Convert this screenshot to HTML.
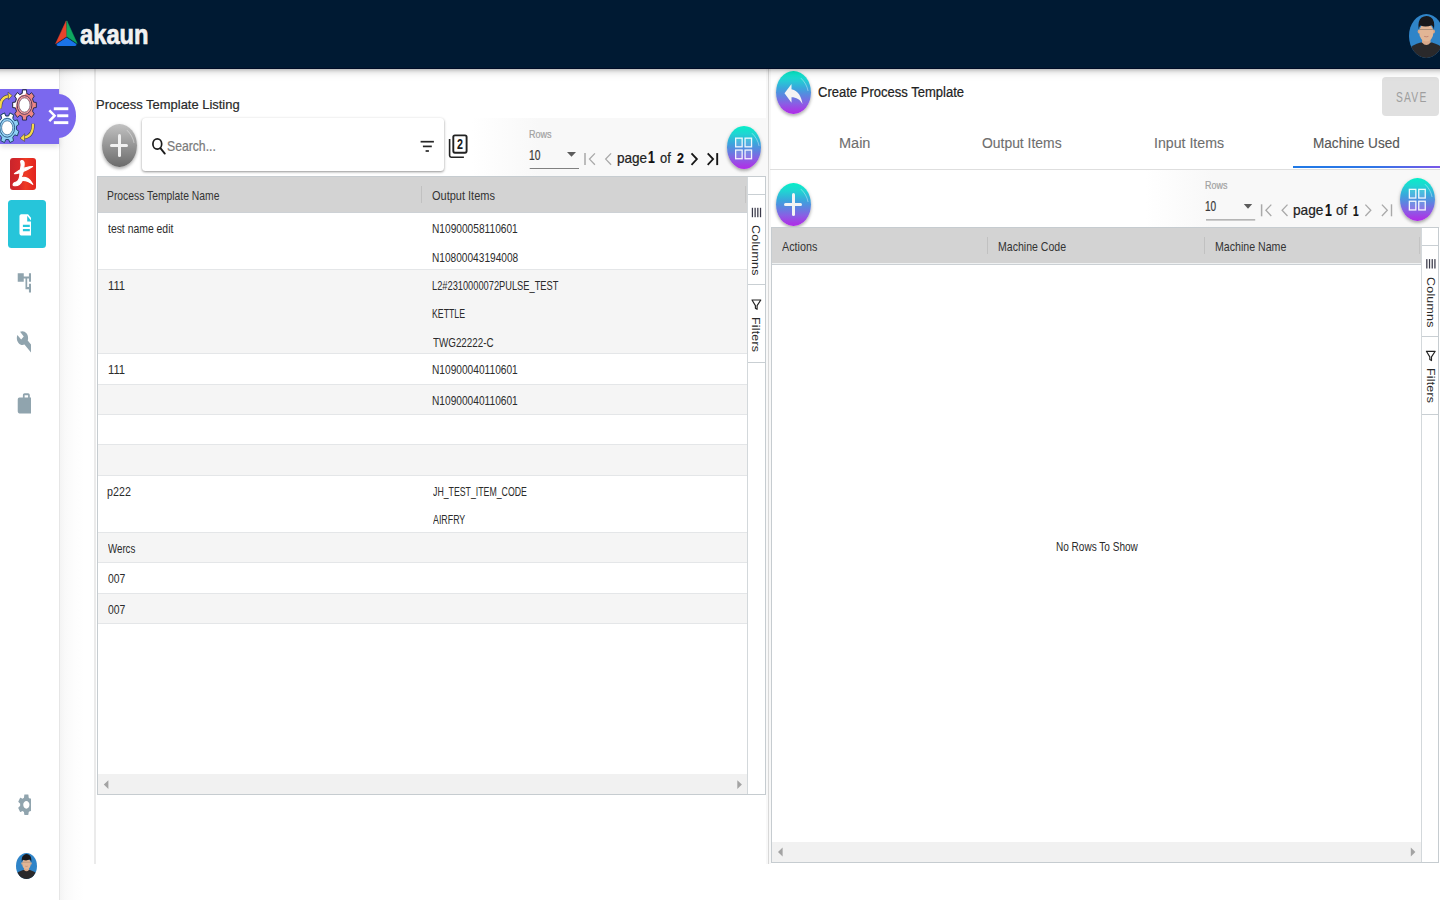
<!DOCTYPE html>
<html lang="en"><head><meta charset="utf-8"><title>akaun - Process Template</title>
<style>
*{box-sizing:border-box;margin:0;padding:0}
html,body{width:1440px;height:900px;overflow:hidden;background:#fff;font-family:"Liberation Sans",sans-serif}
.a{position:absolute}
.t{position:absolute;white-space:nowrap;line-height:1;transform-origin:0 0;display:block;z-index:7;-webkit-text-stroke:0.22px currentColor}
svg{position:absolute;overflow:visible}
#topbar{left:-20px;top:0;width:1480px;height:69px;background:#001a33;border-bottom:1px solid #000c26;box-shadow:0 1px 4px rgba(0,0,0,.26),0 3px 9px rgba(0,0,0,.13);z-index:5}
#side{left:0;top:69px;width:60px;height:831px;background:#fff;border-right:1px solid #e6e6e6;z-index:2}
#gap{left:60px;top:69px;width:35px;height:831px;background:linear-gradient(to right,#f4f4f4 0,#f9f9f9 5px,#fdfdfd 14px,#fff 24px)}
.fab{position:absolute;width:34.5px;height:43px;border-radius:50%;box-shadow:0 2px 3px rgba(0,0,0,.24),0 1px 4px rgba(0,0,0,.12)}
.grad{background:linear-gradient(to bottom,#06eec8 0%,#1fd6d2 18%,#3aa6dc 40%,#5f82e0 58%,#8a5ee4 76%,#a838e6 93%,#ae2ee8 100%)}
.grey{background:linear-gradient(to bottom,#c2c2c2 0%,#9a9a9a 45%,#6b6b6b 100%)}
.hdr{background:#d3d3d3}
.row{position:absolute;left:0;width:100%;border-bottom:1px solid #e4e6e8}
.odd{background:#f5f5f5}
.ln{position:absolute;background:#c9cfd3}
</style></head><body>
<!-- top bar -->
<div id="topbar" class="a"></div>
<svg style="left:55px;top:20px;z-index:6" width="23" height="27" viewBox="0 0 23 27">
  <path d="M11.2 0.9 L0.6 23.7 L11.5 16.6 Z" fill="#e8432a" stroke="#e8432a" stroke-width="0.5" stroke-linejoin="round"/>
  <path d="M11.9 0.9 L22.2 23.5 L11.8 16.6 Z" fill="#0fa860" stroke="#0fa860" stroke-width="0.5" stroke-linejoin="round"/>
  <path d="M11.6 17.5 L1.6 24 Q1.1 26 3.2 26 L19.8 26 Q21.9 26 21.4 24 Z" fill="#1a73e8"/>
</svg>
<!-- avatar top-right -->
<svg style="left:1408.7px;top:14px;z-index:6;overflow:hidden" width="34.6" height="44" viewBox="0 0 34.6 44" preserveAspectRatio="none"><defs><clipPath id="av1"><ellipse cx="17.3" cy="22" rx="17.3" ry="22"/></clipPath></defs><g clip-path="url(#av1)"><rect width="34.6" height="44" fill="#2f84c8"/><path d="M-1 36 Q2 31.6 11.6 28.6 L23 28.6 Q32.6 31.6 35.6 36 L35.6 46 L-1 46 Z" fill="#2a292b"/><path d="M13.2 22 L21.4 22 L21.6 28.4 Q17.3 33.6 13 28.4 Z" fill="#d9a98a"/><ellipse cx="9.9" cy="17.6" rx="1.2" ry="2" fill="#d8a585"/><ellipse cx="24.7" cy="17.6" rx="1.2" ry="2" fill="#d8a585"/><ellipse cx="17.3" cy="18.4" rx="7.1" ry="9.2" fill="#e2b595"/><path d="M9.6 15.4 Q8.6 6.5 12.6 3.6 Q17 0.4 21.8 3.2 Q26.2 6 25 15.4 Q24.4 12.4 22.8 11.2 Q17 13.6 11.4 11.6 Q10 13 9.6 15.4 Z" fill="#18181b"/><path d="M10.8 15.6 H23.8" stroke="#6b5a52" stroke-width="0.7" opacity=".7"/><path d="M15.2 22.4 Q17.3 23.2 19.4 22.4" stroke="#b97a6a" stroke-width="0.8" fill="none"/></g></svg>
<!-- sidebar -->
<div id="gap" class="a"></div>
<div id="side" class="a"></div>
<div class="a" style="left:0;top:88.7px;width:59px;height:55.3px;background:#7b68ee;z-index:3;box-shadow:0 3px 5px rgba(0,0,0,.12)"></div>
<div class="a" style="left:58px;top:94.4px;width:17.6px;height:43.6px;background:#7b68ee;border-radius:0 17px 17px 0/0 21.8px 21.8px 0;z-index:3"></div>
<svg style="left:0;top:0;z-index:4" width="80" height="150" viewBox="0 0 80 150">
<defs><clipPath id="cw"><path d="M0 88 L30 88 L12 112 L0 112 Z"/></clipPath><clipPath id="cw2"><path d="M-6 110 L20 110 L9 124 L-6 128 Z"/></clipPath></defs>
<path d="M33.58 102.12 L36.34 102.49 L36.34 107.51 L33.58 107.88 L32.52 111.16 L34.26 113.90 L31.48 117.45 L29.33 115.22 L26.76 116.58 L26.47 120.09 L22.53 120.09 L22.24 116.58 L19.67 115.22 L17.52 117.45 L14.74 113.90 L16.48 111.16 L15.42 107.88 L12.66 107.51 L12.66 102.49 L15.42 102.12 L16.48 98.84 L14.74 96.10 L17.52 92.55 L19.67 94.78 L22.24 93.42 L22.53 89.91 L26.47 89.91 L26.76 93.42 L29.33 94.78 L31.48 92.55 L34.26 96.10 L32.52 98.84 Z" fill="#ee8686" stroke="#2b2d55" stroke-width="1" stroke-linejoin="round"/>
<path d="M33.58 102.12 L36.34 102.49 L36.34 107.51 L33.58 107.88 L32.52 111.16 L34.26 113.90 L31.48 117.45 L29.33 115.22 L26.76 116.58 L26.47 120.09 L22.53 120.09 L22.24 116.58 L19.67 115.22 L17.52 117.45 L14.74 113.90 L16.48 111.16 L15.42 107.88 L12.66 107.51 L12.66 102.49 L15.42 102.12 L16.48 98.84 L14.74 96.10 L17.52 92.55 L19.67 94.78 L22.24 93.42 L22.53 89.91 L26.47 89.91 L26.76 93.42 L29.33 94.78 L31.48 92.55 L34.26 96.10 L32.52 98.84 Z" fill="#fff" clip-path="url(#cw)" stroke="#2b2d55" stroke-width="1" stroke-linejoin="round"/>
<ellipse cx="24.5" cy="105" rx="8.2" ry="10.3" fill="#ee8686"/>
<ellipse cx="24.5" cy="105" rx="7.4" ry="9.4" fill="#f3a3a3" stroke="#4a3050" stroke-width="0.9"/>
<ellipse cx="24.5" cy="105" rx="5.6" ry="7.2" fill="#fff" stroke="#5a3a55" stroke-width="0.7"/>
<path d="M16.46 129.56 L18.89 131.23 L17.38 135.84 L14.73 134.84 L12.76 137.34 L13.55 140.70 L9.91 142.61 L8.59 139.52 L5.81 139.52 L4.49 142.61 L0.85 140.70 L1.64 137.34 L-0.33 134.84 L-2.98 135.84 L-4.49 131.23 L-2.06 129.56 L-2.06 126.04 L-4.49 124.37 L-2.98 119.76 L-0.33 120.76 L1.64 118.26 L0.85 114.90 L4.49 112.99 L5.81 116.08 L8.59 116.08 L9.91 112.99 L13.55 114.90 L12.76 118.26 L14.73 120.76 L17.38 119.76 L18.89 124.37 L16.46 126.04 Z" fill="#8fd0f5" stroke="#23466e" stroke-width="1" stroke-linejoin="round"/>
<path d="M16.46 129.56 L18.89 131.23 L17.38 135.84 L14.73 134.84 L12.76 137.34 L13.55 140.70 L9.91 142.61 L8.59 139.52 L5.81 139.52 L4.49 142.61 L0.85 140.70 L1.64 137.34 L-0.33 134.84 L-2.98 135.84 L-4.49 131.23 L-2.06 129.56 L-2.06 126.04 L-4.49 124.37 L-2.98 119.76 L-0.33 120.76 L1.64 118.26 L0.85 114.90 L4.49 112.99 L5.81 116.08 L8.59 116.08 L9.91 112.99 L13.55 114.90 L12.76 118.26 L14.73 120.76 L17.38 119.76 L18.89 124.37 L16.46 126.04 Z" fill="#fff" clip-path="url(#cw2)" stroke="#23466e" stroke-width="1" stroke-linejoin="round"/>
<ellipse cx="7.2" cy="127.8" rx="8.2" ry="10.3" fill="#8fd0f5"/>
<ellipse cx="7.2" cy="127.8" rx="7.4" ry="9.4" fill="#9ad6f6" stroke="#23507e" stroke-width="0.9"/>
<ellipse cx="7.2" cy="127.8" rx="5.6" ry="7" fill="#fff" stroke="#2a5a8a" stroke-width="0.7"/>
<path d="M0.2 108.5 Q0.2 97 8.5 96.2" fill="none" stroke="#3a3a50" stroke-width="3.4"/>
<path d="M0.2 108.5 Q0.2 97 8.5 96.2" fill="none" stroke="#f6d84a" stroke-width="2.4"/>
<path d="M8 92.2 L12.2 95.6 L8.6 99.6 Z" fill="#f6d84a" stroke="#3a3a50" stroke-width="0.6" stroke-linejoin="round"/>
<path d="M33 123.8 Q33.4 136.5 24 137.6" fill="none" stroke="#3a3a50" stroke-width="3.2"/>
<path d="M33 123.8 Q33.4 136.5 24 137.6" fill="none" stroke="#f6d84a" stroke-width="2.2"/>
<path d="M24.6 133.8 L20 138.2 L24.6 141.4 Z" fill="#f6d84a" stroke="#3a3a50" stroke-width="0.6" stroke-linejoin="round"/>
<g fill="#fff"><rect x="53.8" y="107.3" width="14.5" height="2.9"/><rect x="57.2" y="114.3" width="11.1" height="2.9"/><rect x="53.8" y="121.2" width="14.5" height="2.9"/></g>
<path d="M49.3 110.4 L54.6 115.7 L49.3 121.2" fill="none" stroke="#fff" stroke-width="2.5"/>
</svg>
<div class="a" style="left:10px;top:158px;width:25.8px;height:31.7px;border-radius:3px;background:linear-gradient(to right,#c9252b 0%,#d8282a 35%,#ee3a24 60%,#e2231f 100%);z-index:3"></div>
<svg style="left:10px;top:158px;z-index:4" width="26" height="32" viewBox="0 0 26 32"><path d="M12.6 2.6 C14.6 3.2 14.4 7 13.6 10.4 C16 9.8 19 8.4 22.6 8.6 C19.6 10.6 15.6 12.6 13.2 13.6 C12.6 16.4 11.8 18.6 11 20 C14.6 18.2 19.4 19.6 22.8 26.4 C20 24 16.6 22.2 12.4 22.4 C10.6 26 7.6 28.8 3.2 27.4 C2.6 26 4 24.6 5.6 24.2 C7.8 23.8 9 21.4 9.6 18.8 C9.8 17.4 10 16.2 9.8 14.8 C8 15.4 6.2 15.8 4.4 15.6 C6.4 14.2 8.4 12.8 10.4 11.6 C11.2 9 11.4 5.6 10.6 3.4 C10.8 2.6 11.8 2.3 12.6 2.6 Z" fill="#fff" stroke="#fff" stroke-width="1.1" stroke-linejoin="round"/></svg>
<div class="a" style="left:7.6px;top:200px;width:38.8px;height:48.4px;border-radius:3.5px;background:#26c5da;z-index:3"></div>
<svg style="left:16.3px;top:211.5px;z-index:4;overflow:hidden" width="14.6" height="25.6" viewBox="0 0 16.928 24" preserveAspectRatio="none"><path d="M14 2H6c-1.1 0-1.99.9-1.99 2L4 20c0 1.1.89 2 1.99 2H18c1.1 0 2-.9 2-2V8l-6-6zm2 16H8v-2h8v2zm0-4H8v-2h8v2zm-3-5V3.5L18.5 9H13z" fill="#fff" /></svg>
<svg style="left:16.3px;top:270.4px;z-index:4;overflow:hidden" width="14.3" height="25.6" viewBox="0 0 16.580 24" preserveAspectRatio="none"><path d="M22 11V3h-7v3H9V3H2v8h7V8h2v10h4v3h7v-8h-7v3h-2V8h2v3z" fill="#90a4ae" /></svg>
<svg style="left:16.3px;top:330.2px;z-index:4;overflow:hidden" width="14.3" height="25.6" viewBox="0 0 16.580 24" preserveAspectRatio="none"><path d="M22.7 19l-9.1-9.1c.9-2.3.4-5-1.5-6.9-2-2-5-2.4-7.4-1.3L9 6 6 9 1.6 4.7C.4 7.1.9 10.1 2.9 12.1c1.9 1.9 4.6 2.4 6.9 1.5l9.1 9.1c.4.4 1 .4 1.4 0l2.3-2.3c.5-.4.5-1.1.1-1.4z" fill="#90a4ae" /></svg>
<svg style="left:16.3px;top:390.9px;z-index:4;overflow:hidden" width="14.3" height="25.6" viewBox="0 0 16.580 24" preserveAspectRatio="none"><path d="M20 6h-4V4c0-1.11-.89-2-2-2h-4c-1.11 0-2 .89-2 2v2H4c-1.11 0-1.99.89-1.99 2L2 19c0 1.11.89 2 2 2h16c1.11 0 2-.89 2-2V8c0-1.11-.89-2-2-2zm-6 0h-4V4h4v2z" fill="#90a4ae" /></svg>
<svg style="left:16.3px;top:792.1px;z-index:4;overflow:hidden" width="14.6" height="25.6" viewBox="0 0 16.928 24" preserveAspectRatio="none"><path d="M19.14 12.94c.04-.3.06-.61.06-.94 0-.32-.02-.64-.07-.94l2.03-1.58c.18-.14.23-.41.12-.61l-1.92-3.32c-.12-.22-.37-.29-.59-.22l-2.39.96c-.5-.38-1.03-.7-1.62-.94l-.36-2.54c-.04-.24-.24-.41-.48-.41h-3.84c-.24 0-.43.17-.47.41l-.36 2.54c-.59.24-1.13.57-1.62.94l-2.39-.96c-.22-.08-.47 0-.59.22L2.74 8.87c-.12.21-.08.47.12.61l2.03 1.58c-.05.3-.09.63-.09.94s.02.64.07.94l-2.03 1.58c-.18.14-.23.41-.12.61l1.92 3.32c.12.22.37.29.59.22l2.39-.96c.5.38 1.03.7 1.62.94l.36 2.54c.05.24.24.41.48.41h3.84c.24 0 .44-.17.47-.41l.36-2.54c.59-.24 1.13-.56 1.62-.94l2.39.96c.22.08.47 0 .59-.22l1.92-3.32c.12-.22.07-.47-.12-.61l-2.01-1.58zM12 15.6c-1.98 0-3.6-1.62-3.6-3.6s1.62-3.6 3.6-3.6 3.6 1.62 3.6 3.6-1.62 3.6-3.6 3.6z" fill="#90a4ae" /></svg>
<svg style="left:15.7px;top:852.7px;z-index:4;overflow:hidden" width="21" height="26" viewBox="0 0 34.6 44" preserveAspectRatio="none"><defs><clipPath id="av2"><ellipse cx="17.3" cy="22" rx="17.3" ry="22"/></clipPath></defs><g clip-path="url(#av2)"><rect width="34.6" height="44" fill="#2f84c8"/><path d="M-1 36 Q2 31.6 11.6 28.6 L23 28.6 Q32.6 31.6 35.6 36 L35.6 46 L-1 46 Z" fill="#2a292b"/><path d="M13.2 22 L21.4 22 L21.6 28.4 Q17.3 33.6 13 28.4 Z" fill="#d9a98a"/><ellipse cx="9.9" cy="17.6" rx="1.2" ry="2" fill="#d8a585"/><ellipse cx="24.7" cy="17.6" rx="1.2" ry="2" fill="#d8a585"/><ellipse cx="17.3" cy="18.4" rx="7.1" ry="9.2" fill="#e2b595"/><path d="M9.6 15.4 Q8.6 6.5 12.6 3.6 Q17 0.4 21.8 3.2 Q26.2 6 25 15.4 Q24.4 12.4 22.8 11.2 Q17 13.6 11.4 11.6 Q10 13 9.6 15.4 Z" fill="#18181b"/><path d="M10.8 15.6 H23.8" stroke="#6b5a52" stroke-width="0.7" opacity=".7"/><path d="M15.2 22.4 Q17.3 23.2 19.4 22.4" stroke="#b97a6a" stroke-width="0.8" fill="none"/></g></svg>
<!-- left panel -->
<div class="a" style="left:94px;top:69px;width:2px;height:795px;background:#ebebeb"></div>
<div class="a" style="left:97px;top:118px;width:669px;height:58px;background:linear-gradient(to right,#fff 0%,#fff 56%,#f8f8f8 66%,#f8f8f8 100%)"></div>
<div class="fab grey" style="left:102.2px;top:124px"></div>
<div class="a" style="left:141.5px;top:118.4px;width:302.5px;height:53px;background:#fff;border-radius:3.5px;box-shadow:0 1px 3px rgba(0,0,0,.3),0 1px 2px rgba(0,0,0,.16)"></div>
<div class="fab grad" style="left:726.5px;top:126.4px"></div>
<!-- left grid -->
<div class="a" id="lg" style="left:97px;top:176px;width:669px;height:619px;border:1px solid #c6ccd0;background:#fff;overflow:hidden">
  <div class="a hdr" style="left:0;top:0;width:649px;height:36px;border-bottom:1px solid #cdd1d5"></div>
  <div class="a" style="left:323px;top:9px;width:1px;height:17px;background:#c1c1c1"></div>
  <div class="a" style="left:647px;top:9px;width:1px;height:17px;background:#c4c4c4"></div>
  <div class="a" id="lrows" style="left:0;top:36px;width:649px;height:564px">
    <div class="row" style="top:0;height:57px"></div>
    <div class="row odd" style="top:57px;height:84px"></div>
    <div class="row" style="top:141px;height:31px"></div>
    <div class="row odd" style="top:172px;height:30px"></div>
    <div class="row" style="top:202px;height:30px"></div>
    <div class="row odd" style="top:232px;height:31px"></div>
    <div class="row" style="top:263px;height:57px"></div>
    <div class="row odd" style="top:320px;height:30px"></div>
    <div class="row" style="top:350px;height:31px"></div>
    <div class="row odd" style="top:381px;height:30px"></div>
  </div>
  <div class="a" style="left:0;top:597px;width:649px;height:20px;background:#f1f1f1"></div>
  <!-- side buttons -->
  <div class="a" style="left:649px;top:0;width:19px;height:620px;background:#fff;border-left:1px solid #d3d8db"></div>
  <div class="ln" style="left:650px;top:17px;width:18px;height:1px"></div>
  <div class="ln" style="left:650px;top:107px;width:18px;height:1px"></div>
  <div class="ln" style="left:650px;top:185px;width:18px;height:1px"></div>
</div>
<!-- divider -->
<div class="a" style="left:766px;top:69px;width:5px;height:795px;background:#f8f8f8"></div><div class="a" style="left:768px;top:69px;width:1px;height:795px;background:#d8d8d8"></div>
<!-- right panel -->
<div class="fab grad" style="left:776px;top:71.4px"></div>
<div class="a" style="left:1382px;top:77px;width:57px;height:39px;background:#e0e0e0;border-radius:4px"></div>
<div class="a" style="left:770px;top:168.6px;width:670px;height:1px;background:#dedede"></div>
<div class="a" style="left:1292.9px;top:166.1px;width:147.1px;height:2.4px;background:linear-gradient(to right,#1f79e6 0%,#2f76e6 55%,#7a57e8 100%)"></div>
<div class="a" style="left:771px;top:169.6px;width:669px;height:58px;background:linear-gradient(to right,#fff 0%,#fff 56%,#f8f8f8 66%,#f8f8f8 100%)"></div>
<div class="fab grad" style="left:776px;top:182.7px"></div>
<div class="fab grad" style="left:1400.2px;top:177.6px"></div>

<!-- right grid -->
<div class="a" id="rg" style="left:771px;top:227px;width:668px;height:636px;border:1px solid #c6ccd0;background:#fff;overflow:hidden">
  <div class="a hdr" style="left:0;top:0;width:649px;height:35px"></div>
  <div class="a" style="left:0;top:35px;width:649px;height:1px;background:#eff1f2"></div>
  <div class="a" style="left:0;top:36px;width:649px;height:1px;background:#cbd0d4"></div>
  <div class="a" style="left:215px;top:9px;width:1px;height:17px;background:#c1c1c1"></div>
  <div class="a" style="left:432px;top:9px;width:1px;height:17px;background:#c1c1c1"></div>
  <div class="a" style="left:647px;top:9px;width:1px;height:17px;background:#c4c4c4"></div>
  <div class="a" style="left:0;top:614px;width:649px;height:20px;background:#f1f1f1"></div>
  <div class="a" style="left:649px;top:0;width:19px;height:640px;background:#fff;border-left:1px solid #d3d8db"></div>
  <div class="ln" style="left:650px;top:17px;width:18px;height:1px"></div>
  <div class="ln" style="left:650px;top:108px;width:18px;height:1px"></div>
  <div class="ln" style="left:650px;top:186px;width:18px;height:1px"></div>
</div>
<div class="a" style="left:110.4px;top:143.6px;width:18px;height:3.7px;border-radius:1.8px;background:#f1f1f1;z-index:2"></div><div class="a" style="left:117.7px;top:134.0px;width:3.4px;height:22.8px;border-radius:1.7px;background:#f1f1f1;z-index:2"></div>
<svg style="left:102.2px;top:124px;z-index:2" width="35" height="44" viewBox="0 0 35 44"><path d="M25.2 6.4 Q30.6 11.5 32 18.6" fill="none" stroke="rgba(255,255,255,.42)" stroke-width="0.9" stroke-linecap="round"/></svg>
<div class="a" style="left:784.2px;top:202.7px;width:18px;height:3.7px;border-radius:1.8px;background:#f4f4f4;z-index:2"></div><div class="a" style="left:791.5px;top:193.1px;width:3.4px;height:22.8px;border-radius:1.7px;background:#f4f4f4;z-index:2"></div>
<svg style="left:776.1px;top:182.8px;z-index:2" width="35" height="44" viewBox="0 0 35 44"><path d="M25.2 6.4 Q30.6 11.5 32 18.6" fill="none" stroke="rgba(255,255,255,.42)" stroke-width="0.9" stroke-linecap="round"/></svg>
<svg style="left:776.1px;top:71.5px;z-index:2" width="35" height="44" viewBox="0 0 35 44"><path d="M25.2 6.4 Q30.6 11.5 32 18.6" fill="none" stroke="rgba(255,255,255,.42)" stroke-width="0.9" stroke-linecap="round"/></svg>
<svg style="left:726.6px;top:126.6px;z-index:2" width="35" height="44" viewBox="0 0 35 44"><path d="M25.2 6.4 Q30.6 11.5 32 18.6" fill="none" stroke="rgba(255,255,255,.42)" stroke-width="0.9" stroke-linecap="round"/></svg>
<svg style="left:1400.3px;top:178px;z-index:2" width="35" height="44" viewBox="0 0 35 44"><path d="M25.2 6.4 Q30.6 11.5 32 18.6" fill="none" stroke="rgba(255,255,255,.42)" stroke-width="0.9" stroke-linecap="round"/></svg>
<svg style="left:0;top:0;z-index:2" width="1440" height="300" viewBox="0 0 1440 300"><rect x="735.65" y="138.15" width="6.5" height="8.7" fill="rgba(255,255,255,.12)" stroke="#fff" stroke-opacity=".92" stroke-width="1.3"/><rect x="735.65" y="150.05" width="6.5" height="8.7" fill="rgba(255,255,255,.12)" stroke="#fff" stroke-opacity=".92" stroke-width="1.3"/><rect x="745.05" y="138.15" width="6.5" height="8.7" fill="rgba(255,255,255,.12)" stroke="#fff" stroke-opacity=".92" stroke-width="1.3"/><rect x="745.05" y="150.05" width="6.5" height="8.7" fill="rgba(255,255,255,.12)" stroke="#fff" stroke-opacity=".92" stroke-width="1.3"/></svg>
<svg style="left:0;top:0;z-index:2" width="1440" height="300" viewBox="0 0 1440 300"><rect x="1409.35" y="189.35" width="6.5" height="8.7" fill="rgba(255,255,255,.12)" stroke="#fff" stroke-opacity=".92" stroke-width="1.3"/><rect x="1409.35" y="201.25" width="6.5" height="8.7" fill="rgba(255,255,255,.12)" stroke="#fff" stroke-opacity=".92" stroke-width="1.3"/><rect x="1418.75" y="189.35" width="6.5" height="8.7" fill="rgba(255,255,255,.12)" stroke="#fff" stroke-opacity=".92" stroke-width="1.3"/><rect x="1418.75" y="201.25" width="6.5" height="8.7" fill="rgba(255,255,255,.12)" stroke="#fff" stroke-opacity=".92" stroke-width="1.3"/></svg>
<svg style="left:0;top:0;z-index:2" width="1440" height="900" viewBox="0 0 1440 900">
<ellipse cx="157.3" cy="144" rx="4.4" ry="5.2" fill="none" stroke="#1c1c1c" stroke-width="1.7"/><path d="M160.4 148.2 L164.8 153.6" stroke="#1c1c1c" stroke-width="1.9" stroke-linecap="round"/>
<g stroke="#262626" stroke-width="1.7"><path d="M420.6 141.7 H433.9"/><path d="M422.9 146.4 H431.8"/><path d="M425.6 151 H428.9"/></g>
<rect x="453.3" y="135.4" width="13.3" height="17.3" rx="1.6" fill="none" stroke="#222" stroke-width="1.9"/>
<path d="M449.6 138.9 V155.6 Q449.6 157.2 451.2 157.2 H463.9" fill="none" stroke="#222" stroke-width="1.6"/>
<text x="459.9" y="149.4" font-family="Liberation Sans, sans-serif" font-weight="700" font-size="13.8" text-anchor="middle" fill="#1a1a1a" transform="translate(459.9 0) scale(0.78 1) translate(-459.9 0)">2</text>
<path d="M567.0 152.0 H576.0 L571.5 156.7 Z" fill="#5c5c5c"/>
<rect x="529.7" y="168" width="49.3" height="1" fill="#808080"/>
<path d="M1243.8 204.0 H1252.2 L1248.0 208.8 Z" fill="#5c5c5c"/>
<rect x="1206" y="219.4" width="49.2" height="1" fill="#8a8a8a"/>
<path d="M585.0 153.1 V165.1" stroke="#a9a9a9" stroke-width="1.5" fill="none"/><path d="M594.9 153.4 L589.5 159.1 L594.9 164.79999999999998" stroke="#a9a9a9" stroke-width="1.3" fill="none"/><path d="M611.1 153.4 L605.7 159.1 L611.1 164.79999999999998" stroke="#a9a9a9" stroke-width="1.3" fill="none"/><path d="M691.5 153.4 L696.9 159.1 L691.5 164.79999999999998" stroke="#161616" stroke-width="1.8" fill="none"/><path d="M707.7 153.4 L713.1 159.1 L707.7 164.79999999999998" stroke="#161616" stroke-width="1.8" fill="none"/><path d="M717.2 153.1 V165.1" stroke="#161616" stroke-width="1.9000000000000001" fill="none"/>
<path d="M1261.6 204.3 V216.3" stroke="#a9a9a9" stroke-width="1.5" fill="none"/><path d="M1271.3000000000002 204.60000000000002 L1265.9 210.3 L1271.3000000000002 216.0" stroke="#a9a9a9" stroke-width="1.3" fill="none"/><path d="M1287.5 204.60000000000002 L1282.1 210.3 L1287.5 216.0" stroke="#a9a9a9" stroke-width="1.3" fill="none"/><path d="M1365.3999999999999 204.60000000000002 L1370.8 210.3 L1365.3999999999999 216.0" stroke="#a9a9a9" stroke-width="1.3" fill="none"/><path d="M1381.8999999999999 204.60000000000002 L1387.3 210.3 L1381.8999999999999 216.0" stroke="#a9a9a9" stroke-width="1.3" fill="none"/><path d="M1391.5 204.3 V216.3" stroke="#a9a9a9" stroke-width="1.4000000000000001" fill="none"/>
<path d="M10 9V5l-7 7 7 7v-4.1c5 0 8.5 1.6 11 5.1-1-5-4-10-11-11z" fill="#f4f4f4" transform="translate(781.5 77.4) scale(1.0 1.33)"/>
<rect x="751.80" y="207.80" width="1.25" height="9.4" fill="#3a3a4a"/><rect x="754.50" y="207.80" width="1.25" height="9.4" fill="#3a3a4a"/><rect x="757.20" y="207.80" width="1.25" height="9.4" fill="#3a3a4a"/><rect x="759.90" y="207.80" width="1.25" height="9.4" fill="#3a3a4a"/><path d="M752.00 300.00 H760.80 L757.10 305.60 V309.30 L755.40 308.20 V305.60 Z" fill="none" stroke="#222" stroke-width="1.15" stroke-linejoin="round"/>
<rect x="1426.20" y="259.10" width="1.25" height="9.4" fill="#3a3a4a"/><rect x="1428.90" y="259.10" width="1.25" height="9.4" fill="#3a3a4a"/><rect x="1431.60" y="259.10" width="1.25" height="9.4" fill="#3a3a4a"/><rect x="1434.30" y="259.10" width="1.25" height="9.4" fill="#3a3a4a"/><path d="M1426.40 351.30 H1435.20 L1431.50 356.90 V360.60 L1429.80 359.50 V356.90 Z" fill="none" stroke="#222" stroke-width="1.15" stroke-linejoin="round"/>
<path d="M108.39999999999999 780.2 V789.0 L103.8 784.6 Z" fill="#a3a3a3"/>
<path d="M737.3 780.2 V789.0 L741.9 784.6 Z" fill="#a3a3a3"/>
<path d="M782.6 847.6 V856.4 L778 852 Z" fill="#a3a3a3"/>
<path d="M1410.8 847.6 V856.4 L1415.3999999999999 852 Z" fill="#a3a3a3"/>
</svg>
<span class="t" style="left:80.29px;top:21.00px;font-size:28px;color:#f2f2f2;font-weight:700;transform:scaleX(0.8469);-webkit-text-stroke:0.7px #f2f2f2;">akaun</span>
<span class="t" style="left:96.16px;top:98.00px;font-size:13.5px;color:#2a2a2a;font-weight:400;transform:scaleX(0.9586);">Process Template Listing</span>
<span class="t" style="left:166.69px;top:139.00px;font-size:14.5px;color:#7a7a7a;font-weight:400;transform:scaleX(0.8415);">Search...</span>
<span class="t" style="left:529.03px;top:130.00px;font-size:10px;color:#a2a2a2;font-weight:400;transform:scaleX(0.9013);">Rows</span>
<span class="t" style="left:529.08px;top:148.00px;font-size:14px;color:#3a3a3a;font-weight:400;transform:scaleX(0.7359);">10</span>
<span class="t" style="left:616.85px;top:151.00px;font-size:14.5px;color:#222;font-weight:400;transform:scaleX(0.9348);">page</span>
<span class="t" style="left:648.34px;top:149.00px;font-size:17px;color:#111;font-weight:700;transform:scaleX(0.7200);--k:0.72;">1</span>
<span class="t" style="left:660.08px;top:151.00px;font-size:14.5px;color:#222;font-weight:400;transform:scaleX(0.8904);">of</span>
<span class="t" style="left:676.83px;top:151.00px;font-size:14px;color:#111;font-weight:700;transform:scaleX(0.8892);">2</span>
<span class="t" style="left:107.47px;top:189.00px;font-size:13px;color:#333;font-weight:400;transform:scaleX(0.7950);-webkit-text-stroke:0;">Process Template Name</span>
<span class="t" style="left:432.35px;top:189.00px;font-size:13px;color:#333;font-weight:400;transform:scaleX(0.8456);-webkit-text-stroke:0;">Output Items</span>
<span class="t" style="left:108.09px;top:222.00px;font-size:13px;color:#2b2b2b;font-weight:400;transform:scaleX(0.8000);-webkit-text-stroke:0;">test name edit</span>
<span class="t" style="left:432.09px;top:222.00px;font-size:13px;color:#2b2b2b;font-weight:400;transform:scaleX(0.7822);-webkit-text-stroke:0;">N10900058110601</span>
<span class="t" style="left:432.09px;top:251.00px;font-size:13px;color:#2b2b2b;font-weight:400;transform:scaleX(0.7793);-webkit-text-stroke:0;">N10800043194008</span>
<span class="t" style="left:107.50px;top:279.00px;font-size:13px;color:#2b2b2b;font-weight:400;transform:scaleX(0.8633);-webkit-text-stroke:0;">111</span>
<span class="t" style="left:432.16px;top:279.00px;font-size:13px;color:#2b2b2b;font-weight:400;transform:scaleX(0.7135);-webkit-text-stroke:0;">L2#2310000072PULSE_TEST</span>
<span class="t" style="left:432.20px;top:307.00px;font-size:13px;color:#2b2b2b;font-weight:400;transform:scaleX(0.6726);-webkit-text-stroke:0;">KETTLE</span>
<span class="t" style="left:432.70px;top:336.00px;font-size:13px;color:#2b2b2b;font-weight:400;transform:scaleX(0.7554);-webkit-text-stroke:0;">TWG22222-C</span>
<span class="t" style="left:107.50px;top:363.00px;font-size:13px;color:#2b2b2b;font-weight:400;transform:scaleX(0.8633);-webkit-text-stroke:0;">111</span>
<span class="t" style="left:432.09px;top:363.00px;font-size:13px;color:#2b2b2b;font-weight:400;transform:scaleX(0.7822);-webkit-text-stroke:0;">N10900040110601</span>
<span class="t" style="left:432.09px;top:394.00px;font-size:13px;color:#2b2b2b;font-weight:400;transform:scaleX(0.7822);-webkit-text-stroke:0;">N10900040110601</span>
<span class="t" style="left:107.45px;top:485.00px;font-size:13px;color:#2b2b2b;font-weight:400;transform:scaleX(0.8242);-webkit-text-stroke:0;">p222</span>
<span class="t" style="left:432.72px;top:485.00px;font-size:13px;color:#2b2b2b;font-weight:400;transform:scaleX(0.6733);-webkit-text-stroke:0;">JH_TEST_ITEM_CODE</span>
<span class="t" style="left:432.90px;top:513.00px;font-size:13px;color:#2b2b2b;font-weight:400;transform:scaleX(0.6800);-webkit-text-stroke:0;">AIRFRY</span>
<span class="t" style="left:108.10px;top:542.00px;font-size:13px;color:#2b2b2b;font-weight:400;transform:scaleX(0.7470);-webkit-text-stroke:0;">Wercs</span>
<span class="t" style="left:107.58px;top:572.00px;font-size:13px;color:#2b2b2b;font-weight:400;transform:scaleX(0.7984);-webkit-text-stroke:0;">007</span>
<span class="t" style="left:107.58px;top:603.00px;font-size:13px;color:#2b2b2b;font-weight:400;transform:scaleX(0.7984);-webkit-text-stroke:0;">007</span>
<span class="t" style="left:818.45px;top:85.00px;font-size:14px;color:#222;font-weight:400;transform:scaleX(0.9310);">Create Process Template</span>
<span class="t" style="left:1396.09px;top:89.00px;font-size:15.5px;color:#9e9e9e;font-weight:400;transform:scaleX(0.6633);letter-spacing:1.8px;-webkit-text-stroke:0;">SAVE</span>
<span class="t" style="left:838.84px;top:136.00px;font-size:14px;color:#6e6e6e;font-weight:400;transform:scaleX(1.0361);-webkit-text-stroke:0.1px currentColor;">Main</span>
<span class="t" style="left:982.00px;top:136.00px;font-size:14px;color:#6e6e6e;font-weight:400;transform:scaleX(0.9929);-webkit-text-stroke:0.1px currentColor;">Output Items</span>
<span class="t" style="left:1153.83px;top:136.00px;font-size:14px;color:#6e6e6e;font-weight:400;transform:scaleX(1.0107);-webkit-text-stroke:0.1px currentColor;">Input Items</span>
<span class="t" style="left:1312.91px;top:136.00px;font-size:14px;color:#585858;font-weight:400;transform:scaleX(0.9703);-webkit-text-stroke:0.15px currentColor;">Machine Used</span>
<span class="t" style="left:1205.18px;top:181.00px;font-size:10px;color:#a2a2a2;font-weight:400;transform:scaleX(0.8950);">Rows</span>
<span class="t" style="left:1205.49px;top:199.00px;font-size:14px;color:#3a3a3a;font-weight:400;transform:scaleX(0.7215);">10</span>
<span class="t" style="left:1292.94px;top:203.00px;font-size:14.5px;color:#222;font-weight:400;transform:scaleX(0.9446);">page</span>
<span class="t" style="left:1324.99px;top:202.00px;font-size:17px;color:#111;font-weight:700;transform:scaleX(0.7200);--k:0.72;">1</span>
<span class="t" style="left:1336.47px;top:203.00px;font-size:14.5px;color:#222;font-weight:400;transform:scaleX(0.9166);">of</span>
<span class="t" style="left:1352.58px;top:204.00px;font-size:14px;color:#111;font-weight:700;transform:scaleX(0.7200);--k:0.72;">1</span>
<span class="t" style="left:782.20px;top:240.00px;font-size:13px;color:#333;font-weight:400;transform:scaleX(0.8286);-webkit-text-stroke:0;">Actions</span>
<span class="t" style="left:998.06px;top:240.00px;font-size:13px;color:#333;font-weight:400;transform:scaleX(0.8118);-webkit-text-stroke:0;">Machine Code</span>
<span class="t" style="left:1214.75px;top:240.00px;font-size:13px;color:#333;font-weight:400;transform:scaleX(0.8159);-webkit-text-stroke:0;">Machine Name</span>
<span class="t" style="left:1055.70px;top:540.00px;font-size:13px;color:#2b2b2b;font-weight:400;transform:scaleX(0.7721);-webkit-text-stroke:0;">No Rows To Show</span>
<span class="t" style="left:761.13px;top:225.47px;font-size:12.5px;color:#2a2a2a;-webkit-text-stroke:0;transform:rotate(90deg) scale(1.0000,0.92);letter-spacing:0.2px">Columns</span>
<span class="t" style="left:761.13px;top:316.51px;font-size:12.5px;color:#2a2a2a;-webkit-text-stroke:0;transform:rotate(90deg) scale(0.9926,0.92);letter-spacing:0.2px">Filters</span>
<span class="t" style="left:1435.73px;top:276.88px;font-size:12.5px;color:#2a2a2a;-webkit-text-stroke:0;transform:rotate(90deg) scale(1.0000,0.92);letter-spacing:0.2px">Columns</span>
<span class="t" style="left:1435.73px;top:367.91px;font-size:12.5px;color:#2a2a2a;-webkit-text-stroke:0;transform:rotate(90deg) scale(0.9926,0.92);letter-spacing:0.2px">Filters</span>
</body></html>
